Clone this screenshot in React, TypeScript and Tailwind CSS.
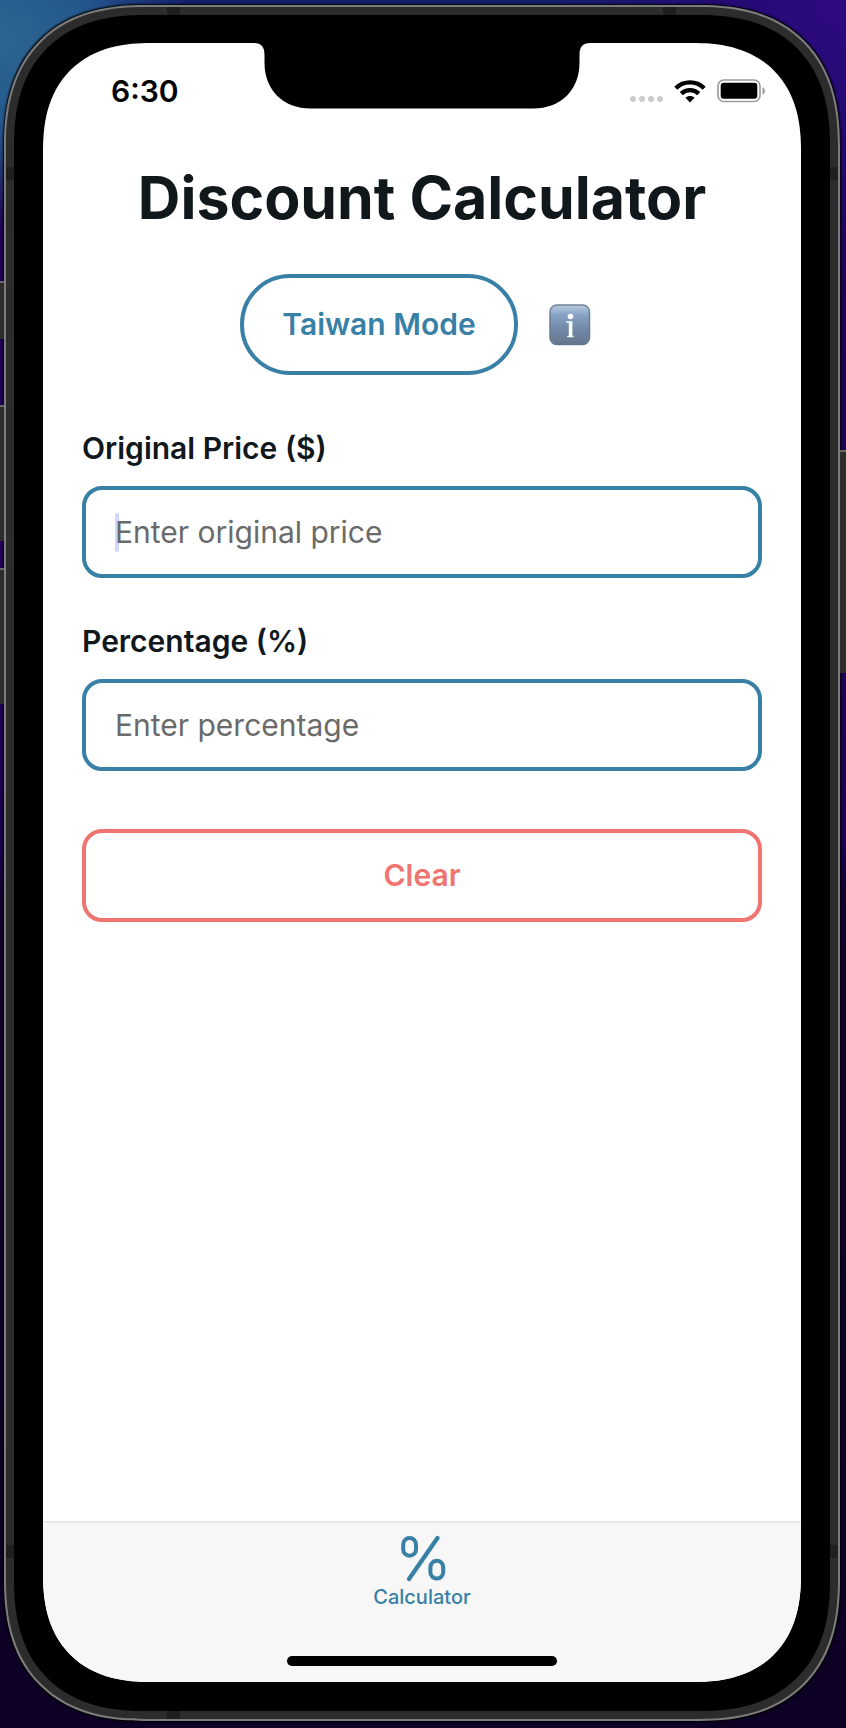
import { useState } from "react";

function WifiIcon() {
  return (
    <svg width="32" height="23" viewBox="0 0 32 23" aria-hidden="true" fill="none" stroke="#000">
      <path d="M1.800 8.200C9.600 0.400 22.400 0.400 30.200 8.200" strokeWidth="4.400" />
      <path d="M7.300 13.600C12.200 9 19.800 9 24.700 13.600" strokeWidth="4.400" />
      <path d="M16 22.500l-4.600-4.700c2.600-2.300 6.600-2.300 9.200 0z" fill="#000" stroke="none" />
    </svg>
  );
}

function BatteryIcon() {
  return (
    <svg width="49" height="24" viewBox="0 0 49 24" aria-hidden="true">
      <rect x="1" y="1" width="42" height="21.500" rx="6" fill="none" stroke="#9c9c9c" strokeWidth="1.700" />
      <rect x="3.700" y="3.800" width="36.600" height="16" rx="3" fill="#000" />
      <path d="M45.500 8.200c3.200 1 3.200 6.400 0 7.400z" fill="#9c9c9c" />
    </svg>
  );
}

function InfoIcon() {
  return (
    <svg width="42" height="42" viewBox="0 0 42 42" aria-hidden="true">
      <defs>
        <linearGradient id="infoFill" x1="0" y1="0" x2="0" y2="1">
          <stop offset="0" stopColor="#b9cbdc" />
          <stop offset="0.250" stopColor="#87a3c4" />
          <stop offset="0.600" stopColor="#7389a9" />
          <stop offset="1" stopColor="#65768e" />
        </linearGradient>
        <linearGradient id="infoEdge" x1="0" y1="0" x2="0" y2="1">
          <stop offset="0" stopColor="#70839c" />
          <stop offset="1" stopColor="#65758d" />
        </linearGradient>
      </defs>
      <rect x="1" y="1" width="39.500" height="39.500" rx="7" fill="url(#infoFill)" stroke="url(#infoEdge)" strokeWidth="1.500" />
      <circle cx="21.500" cy="12.500" r="2.800" fill="#fff" />
      <path d="M17.200 17.200h6.200v14.600h1.200v1.400h-6.400v-1.400h1.600V18.800h-2.600z" fill="#fff" />
    </svg>
  );
}

function PercentIcon() {
  return (
    <svg width="48" height="48" viewBox="0 0 48 48" aria-hidden="true" fill="none" stroke="#3880a5" strokeWidth="4" strokeLinecap="round">
      <rect x="5.200" y="3" width="12.800" height="17.800" rx="6.400" />
      <rect x="32.400" y="25.800" width="12.800" height="17.800" rx="6.400" />
      <path d="M39.500 3L11 44" strokeWidth="4.300" />
    </svg>
  );
}

function Notch() {
  return (
    <svg className="absolute top-0 left-1/2 -translate-x-1/2" width="337" height="66" viewBox="0 0 337 66" aria-hidden="true">
      <path d="M0 0C8 0 11 4 11 12V20C11 47 30 65.500 57 65.500H280C307 65.500 326 47 326 20V12C326 4 329 0 337 0z" fill="#000" />
    </svg>
  );
}

const antennaBands = [
  "top-0 left-[161px] h-2 w-[13px]",
  "top-0 right-[162px] h-2 w-[13px]",
  "bottom-0 left-[161px] h-2 w-[13px]",
  "left-0 top-[160px] h-[13px] w-2",
  "right-0 top-[160px] h-[13px] w-2",
  "left-0 bottom-[161px] h-[13px] w-2",
  "right-0 bottom-[161px] h-[13px] w-2",
];

const sideButtons = [
  "left-0 top-[281px] h-[58px] w-1",
  "left-0 top-[405px] h-[136px] w-1",
  "left-0 top-[568px] h-[136px] w-1",
  "right-0 top-[450px] h-[223px] w-1.5",
];

export default function App() {
  const [price, setPrice] = useState("");
  const [percent, setPercent] = useState("");
  const field =
    "block h-[92px] w-full rounded-[20px] border-4 border-[#3880a5] bg-transparent px-[29px] text-[30px] text-[#11181c] outline-none placeholder:text-[#6a6a6a] placeholder:opacity-100";

  return (
    <div className="relative flex min-h-screen bg-[radial-gradient(circle_at_0px_40px,#2c6690_0px,#24568c_90px,transparent_190px),radial-gradient(circle_at_100%_0px,#2e0a82_0px,#240a72_120px,transparent_300px),linear-gradient(180deg,#14206e_0px,#1f0052_180px,#22005c_600px,#1c0050_846px,#12002e_900px,#0d0024_100%)] pt-[5px] pr-1.5 pb-[7px] pl-1 font-['Inter','Liberation_Sans',sans-serif]">
      {sideButtons.map((place) => (
        <span key={place} className={`absolute border-t-2 border-[#6a6a6a] bg-[#2e2d2c] ${place}`} />
      ))}

      <div className="flex flex-1 rounded-[141px] bg-[#7c7c7c] p-0.5 shadow-[0_0_2px_1px_#000000] [corner-shape:superellipse(1.25)]">
        <div className="relative flex flex-1 rounded-[139px] bg-[#2c2c2c] p-2 [corner-shape:superellipse(1.25)]">
          {antennaBands.map((place) => (
            <span key={place} className={`absolute bg-[#1f1f1f] ${place}`} />
          ))}
          <div className="flex flex-1 rounded-[131px] bg-black px-[29px] pt-7 pb-[29px] [corner-shape:superellipse(1.25)]">
            <div className="relative flex flex-1 flex-col overflow-hidden rounded-[108px] bg-white [corner-shape:superellipse(1.25)]">
              <Notch />
              <header className="flex h-24 items-center justify-between pr-[35px] pl-[68px]">
                <time className="text-[30px] font-semibold text-black">6:30</time>
                <div className="flex items-center gap-[11px]">
                  <div className="flex gap-[3px] pt-4">
                    <span className="size-1.5 rounded-sm bg-[#cbcbcb]" />
                    <span className="size-1.5 rounded-sm bg-[#cbcbcb]" />
                    <span className="size-1.5 rounded-sm bg-[#cbcbcb]" />
                    <span className="size-1.5 rounded-sm bg-[#cbcbcb]" />
                  </div>
                  <WifiIcon />
                  <BatteryIcon />
                </div>
              </header>

              <main className="flex flex-1 flex-col px-[39px] pt-[23px]">
                <h1 className="text-center text-[59px] leading-[72px] font-bold whitespace-nowrap text-[#11181c]">
                  Discount Calculator
                </h1>
                <div className="mt-10 flex items-center justify-center gap-[31px] pr-[13px]">
                  <button
                    type="button"
                    className="h-[101px] rounded-[50px] border-4 border-[#3880a5] px-[38px] text-[30px] font-semibold text-[#3880a5]"
                  >
                    Taiwan Mode
                  </button>
                  <button type="button" aria-label="Information">
                    <InfoIcon />
                  </button>
                </div>

                <label htmlFor="price" className="mt-[53px] text-[30px] leading-10 font-semibold text-[#11181c]">
                  Original Price ($)
                </label>
                <div className="relative mt-[18px]">
                  <span className="absolute top-[27px] left-[33px] h-[39px] w-1 rounded-sm bg-[#d0d9fa]" />
                  <input
                    id="price"
                    inputMode="decimal"
                    placeholder="Enter original price"
                    value={price}
                    onChange={(e) => setPrice(e.target.value)}
                    className={`relative ${field}`}
                  />
                </div>

                <label htmlFor="percent" className="mt-[43px] text-[30px] leading-10 font-semibold text-[#11181c]">
                  Percentage (%)
                </label>
                <div className="mt-[18px]">
                  <input
                    id="percent"
                    inputMode="decimal"
                    placeholder="Enter percentage"
                    value={percent}
                    onChange={(e) => setPercent(e.target.value)}
                    className={field}
                  />
                </div>

                <button
                  type="button"
                  onClick={() => {
                    setPrice("");
                    setPercent("");
                  }}
                  className="mt-[58px] h-[93px] rounded-[20px] border-4 border-[#f07470] text-[30px] font-semibold text-[#f07470]"
                >
                  Clear
                </button>
              </main>

              <nav className="flex flex-col items-center border-t-2 border-[#e8e8e8] bg-[#f7f7f7] pt-3 pb-4">
                <a href="#calculator" className="flex flex-col items-center text-[#3880a5]">
                  <PercentIcon />
                  <span className="mt-0.5 text-[20px] leading-6 font-medium">Calculator</span>
                </a>
                <span className="mt-[47px] h-[10px] w-[270px] rounded-full bg-black" />
              </nav>
            </div>
          </div>
        </div>
      </div>
    </div>
  );
}
